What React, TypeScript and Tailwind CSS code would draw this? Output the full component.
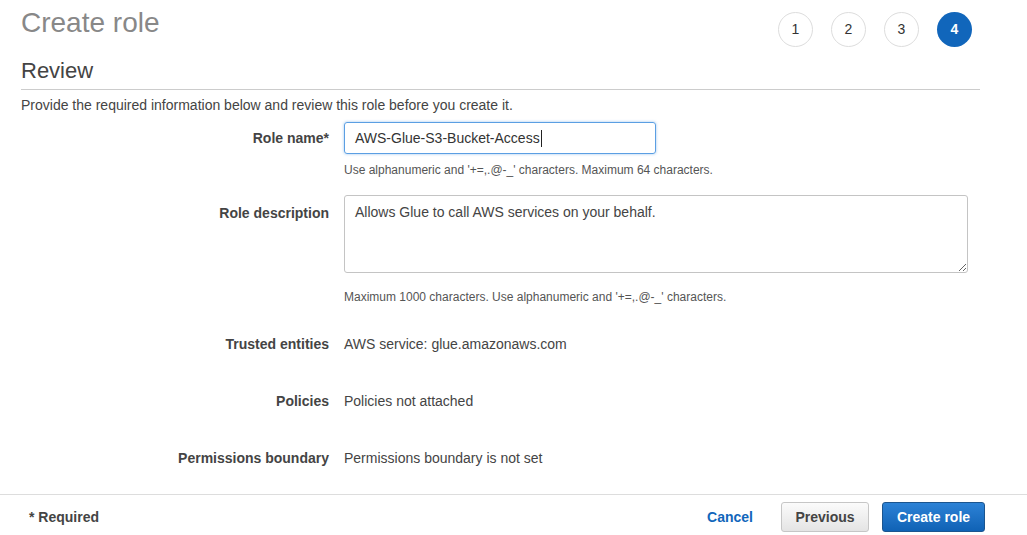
import React from "react";

const font = { fontFamily: '"Liberation Sans", Arial, sans-serif' };

function Step({ n, active }: { n: number; active?: boolean }) {
  return (
    <div
      className={
        active
          ? "w-[35px] h-[35px] rounded-full bg-[#1166bb] text-white font-bold flex items-center justify-center text-[14px]"
          : "w-[35px] h-[35px] rounded-full border border-[#dddddd] text-[#333] flex items-center justify-center text-[14px]"
      }
    >
      {n}
    </div>
  );
}

function Row({ label, children, className = "" }: { label: string; children: React.ReactNode; className?: string }) {
  return (
    <div className={"flex items-start " + className}>
      <div className="w-[308px] shrink-0 text-right font-bold text-[#444] text-[14px] leading-[20px]">{label}</div>
      <div className="ml-[15px] text-[14px] leading-[20px] text-[#444]">{children}</div>
    </div>
  );
}

export default function App() {
  return (
    <div className="w-[1027px] h-[535px] bg-white flex flex-col overflow-hidden" style={font}>
      <div className="flex-1 pl-[21px] pr-[47px]">
        <div className="flex justify-between items-start">
          <h1 className="text-[28px] leading-[31px] text-[#888] mt-[7px]">Create role</h1>
          <div className="flex gap-[18px] mt-[12px] mr-[8px]">
            <Step n={1} />
            <Step n={2} />
            <Step n={3} />
            <Step n={4} active />
          </div>
        </div>
        <div className="mt-[12px] border-b border-[#cccccc] pb-[6px]">
          <h2 className="text-[22px] leading-[24px] text-[#444]">Review</h2>
        </div>
        <p className="mt-[5px] text-[14px] leading-[20px] text-[#444]">
          Provide the required information below and review this role before you create it.
        </p>

        <div className="flex items-start mt-[7px]">
          <div className="w-[308px] shrink-0 text-right font-bold text-[#444] text-[14px] leading-[20px] pt-[6px]">
            Role name*
          </div>
          <div className="ml-[15px]">
            <div className="w-[312px] h-[32px] border border-[#5b9fe3] rounded-[3px] shadow-[0_0_3px_rgba(91,159,227,0.6)] flex items-center pl-[10px] text-[14px] text-[#333]">
              <span>AWS-Glue-S3-Bucket-Access</span>
              <span className="inline-block w-px h-[17px] bg-[#222] ml-px" />
            </div>
            <div className="mt-[8px] text-[12px] leading-[16px] text-[#555]">
              Use alphanumeric and '+=,.@-_' characters. Maximum 64 characters.
            </div>
          </div>
        </div>

        <div className="flex items-start mt-[17px]">
          <div className="w-[308px] shrink-0 text-right font-bold text-[#444] text-[14px] leading-[20px] pt-[8px]">
            Role description
          </div>
          <div className="ml-[15px]">
            <textarea
              readOnly
              defaultValue="Allows Glue to call AWS services on your behalf."
              className="block w-[624px] h-[78px] border border-[#c4c4c4] rounded-[3px] px-[10px] py-[6px] text-[14px] leading-[20px] text-[#444] outline-none"
              style={font}
            />
            <div className="mt-[16px] text-[12px] leading-[16px] text-[#555]">
              Maximum 1000 characters. Use alphanumeric and '+=,.@-_' characters.
            </div>
          </div>
        </div>

        <Row label="Trusted entities" className="mt-[29px]">
          AWS service: glue.amazonaws.com
        </Row>
        <Row label="Policies" className="mt-[37px]">
          Policies not attached
        </Row>
        <Row label="Permissions boundary" className="mt-[37px]">
          Permissions boundary is not set
        </Row>
      </div>

      <div className="h-[41px] shrink-0 border-t border-[#dddddd] flex items-start pt-[7px] pl-[29px] pr-[42px]">
        <div className="h-[30px] flex items-center font-bold text-[14px] text-[#444]">* Required</div>
        <div className="flex-1" />
        <div className="h-[30px] flex items-center font-bold text-[14px] text-[#1166bb]">Cancel</div>
        <button
          className="ml-[28px] h-[30px] w-[88px] rounded-[3px] border border-[#c6c6c6] bg-gradient-to-b from-[#fbfbfb] to-[#e4e4e4] font-bold text-[14px] text-[#444]"
          style={font}
        >
          Previous
        </button>
        <button
          className="ml-[13px] h-[30px] w-[103px] rounded-[3px] border border-[#1b558f] bg-gradient-to-b from-[#2c82d6] to-[#0f62b5] font-bold text-[14px] text-white"
          style={font}
        >
          Create role
        </button>
      </div>
    </div>
  );
}
